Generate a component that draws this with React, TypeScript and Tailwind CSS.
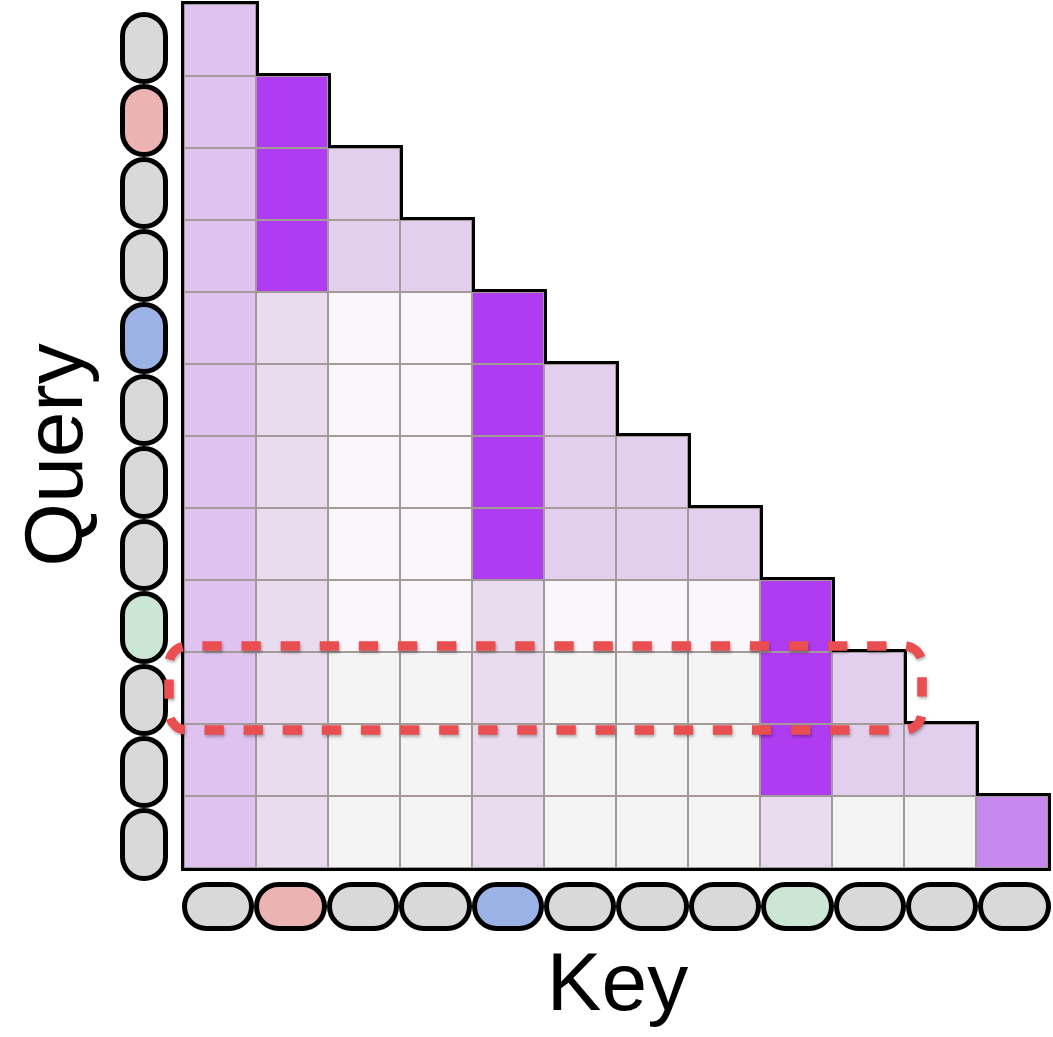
import type { CSSProperties } from "react";

type Token = "gray" | "red" | "blue" | "green";

// token colours, used for both the query column and the key row
const tokenBg: Record<Token, string> = {
  gray: "bg-[#d9d9d9]",
  red: "bg-[#ecb3b3]",
  blue: "bg-[#9bb2e7]",
  green: "bg-[#cbe6d2]",
};

const tokens: Token[] = [
  "gray", "red", "gray", "gray", "blue", "gray",
  "gray", "gray", "green", "gray", "gray", "gray",
];

// attention weights, one letter per cell
const cellBg: Record<string, string> = {
  A: "bg-[#dfc2f0]",
  P: "bg-[#b03cf2]",
  B: "bg-[#e2cfed]",
  C: "bg-[#eadcef]",
  W: "bg-[#fbf6fc]",
  G: "bg-[#f4f4f4]",
  M: "bg-[#c889ee]",
};

const matrix = [
  "A",
  "AP",
  "APB",
  "APBB",
  "ACWWP",
  "ACWWPB",
  "ACWWPBB",
  "ACWWPBBB",
  "ACWWCWWWP",
  "ACGGCGGGPB",
  "ACGGCGGGPBB",
  "ACGGCGGGCGGM",
];

// dashed highlight around query row 9 (page coordinates)
const highlight =
  "M174.27 651.27 A18 18 0 0 1 187 646 H904 A18 18 0 0 1 922 664 V712 A18 18 0 0 1 904 730 H187 A18 18 0 0 1 169 712 V664 A18 18 0 0 1 174.27 651.27 Z";

export default function App() {
  return (
    <div className="relative flex h-[1037px] w-[1053px] overflow-hidden bg-white font-['Liberation_Sans',Arial,sans-serif] text-black">
      {/* Query label */}
      <div className="flex h-[910px] w-[108px] shrink-0 items-center justify-center">
        <span className="-rotate-90 whitespace-nowrap text-[82px] leading-none">Query</span>
      </div>

      {/* Query tokens */}
      <div className="flex w-[73px] shrink-0 flex-col pl-[12px] pt-[12px]">
        {tokens.map((t, i) => (
          <div
            key={i}
            className={`h-[72.4px] w-[48px] shrink-0 rounded-full border-[5px] border-black ${tokenBg[t]}`}
          />
        ))}
      </div>

      {/* Matrix, key tokens, key label */}
      <div className="flex w-[870px] shrink-0 flex-col">
        <div className="flex flex-col items-start pt-px">
          {matrix.map((row, r) => {
            const style: CSSProperties = { zIndex: matrix.length - r };
            return (
              <div
                key={r}
                style={style}
                className={`relative flex bg-black px-[3px] pt-[3px] ${r > 0 ? "-mt-[3px]" : ""} ${
                  r === matrix.length - 1 ? "pb-[3px]" : ""
                }`}
              >
                {row.split("").map((t, c) => (
                  <div
                    key={c}
                    className={`h-[72px] w-[72px] border border-[#a39a9a] ${cellBg[t]}`}
                  />
                ))}
              </div>
            );
          })}
        </div>

        <div className="ml-px mt-[11px] flex">
          {tokens.map((t, i) => (
            <div
              key={i}
              className={`h-[49px] w-[72.4px] shrink-0 rounded-full border-[5px] border-black ${tokenBg[t]}`}
            />
          ))}
        </div>

        <div className="mt-[10px] pl-[3px] text-center text-[82px] leading-none">Key</div>
      </div>

      {/* highlight overlay */}
      <svg
        className="pointer-events-none absolute left-0 top-0 z-20 drop-shadow-[1px_2px_1.5px_rgba(0,0,0,0.3)]"
        width="1053"
        height="1037"
        viewBox="0 0 1053 1037"
      >
        <path
          d={highlight}
          fill="none"
          stroke="#e94f51"
          strokeWidth="9.5"
          pathLength={1680}
          strokeDasharray="19.75 20.25"
          strokeDashoffset={9.875}
        />
      </svg>
    </div>
  );
}
